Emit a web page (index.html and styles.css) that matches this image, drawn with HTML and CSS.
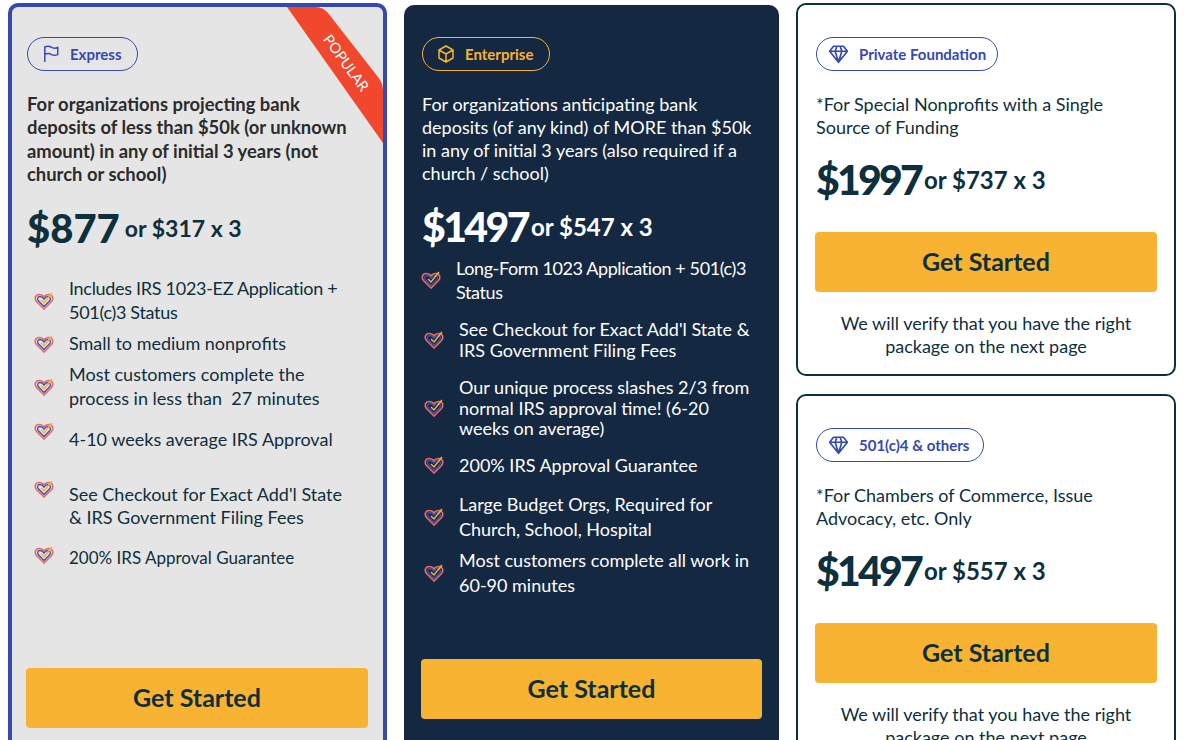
FILE: index.html
```html
<!DOCTYPE html>
<html lang="en">
<head>
    <meta charset="UTF-8">
    <meta name="viewport" content="width=device-width, initial-scale=1.0">
    <title>Pricing</title>
    <link rel="stylesheet" href="styles.css">
</head>
<body>
    <svg class="defs" width="0" height="0">
        <symbol id="heart" viewBox="0 0 20 20">
            <path d="M10 18 L2.500 10.500 C0 7.500 1.500 3.500 5 3.500 C7 3.500 9 4.500 10 6 C11 4.500 13 3.500 15 3.500 C18.500 3.500 20 7.500 17.500 10.500 Z" fill="none" stroke="#ee6a5f" stroke-width="1.600"/>
            <path d="M10 15.500 L4.300 9.800 C2.800 7.800 3.800 5.500 5.800 5.500 C7.300 5.500 9 6.600 10 8.200 C11 6.600 12.700 5.500 14.200 5.500 C16.200 5.500 17.200 7.800 15.700 9.800 Z" fill="none" stroke="#3f51b5" stroke-width="1.300"/>
            <path d="M7 9 L10 12 L18 2" fill="none" stroke="#f8b332" stroke-width="1.500"/>
        </symbol>
    </svg>

    <main class="plans">
        <section class="card card-express">
            <div class="ribbon">
                <svg class="ribbon-shape" viewBox="0 0 103 136"><path d="M7 0 L103 136 V84 Q103 76 98 70 L48 6 Q43 0 36 0 Z" fill="#f0472d"/></svg>
                <span>POPULAR</span>
            </div>
            <div class="badge">
                <svg class="badge-icon" viewBox="0 0 16 16"><path d="M2.500 15 V1.800 C5 .6 7 1.200 8.500 2.200 C10 3 12 3 14 2.200 V8.500 C12 9.300 10 9.300 8.500 8.500 C7 7.600 5 7.200 2.500 8.300" fill="none" stroke="currentColor" stroke-width="1.300"/></svg>
                <span>Express</span>
            </div>
            <p class="intro intro-bold">For organizations projecting bank<br>deposits of less than $50k (or unknown<br>amount) in any of initial 3 years (not<br>church or school)</p>
            <div class="price price-express"><strong>$877</strong><span>or $317 x 3</span></div>
            <ul class="features features-express">
                <li class="squeezed"><svg class="heart"><use href="#heart"/></svg><span>Includes IRS 1023-EZ Application +<br>501(c)3 Status</span></li>
                <li><svg class="heart"><use href="#heart"/></svg><span>Small to medium nonprofits</span></li>
                <li><svg class="heart"><use href="#heart"/></svg><span>Most customers complete the<br>process in less than&nbsp; 27 minutes</span></li>
                <li class="top-icon"><svg class="heart"><use href="#heart"/></svg><span>4-10 weeks average IRS Approval</span></li>
                <li class="top-icon"><svg class="heart"><use href="#heart"/></svg><span>See Checkout for Exact Add'l State<br>&amp; IRS Government Filing Fees</span></li>
                <li class="top-icon"><svg class="heart"><use href="#heart"/></svg><span class="small">200% IRS Approval Guarantee</span></li>
            </ul>
            <a class="cta" href="#">Get Started</a>
        </section>

        <section class="card card-enterprise">
            <div class="badge">
                <svg class="badge-icon" viewBox="0 0 18 18"><path d="M9 1 L16 5 V13 L9 17 L2 13 V5 Z M2 5 L9 9 L16 5 M9 9 V17" fill="none" stroke="currentColor" stroke-width="1.500" stroke-linejoin="round"/></svg>
                <span>Enterprise</span>
            </div>
            <p class="intro">For organizations anticipating bank<br>deposits (of any kind) of MORE than $50k<br>in any of initial 3 years (also required if a<br>church / school)</p>
            <div class="price price-enterprise"><strong>$1497</strong><span>or $547 x 3</span></div>
            <ul class="features features-enterprise">
                <li class="first"><svg class="heart"><use href="#heart"/></svg><span>Long-Form 1023 Application + 501(c)3<br>Status</span></li>
                <li class="tight"><svg class="heart"><use href="#heart"/></svg><span>See Checkout for Exact Add'l State &amp;<br>IRS Government Filing Fees</span></li>
                <li class="tight tight-3"><svg class="heart"><use href="#heart"/></svg><span>Our unique process slashes 2/3 from<br>normal IRS approval time! (6-20<br>weeks on average)</span></li>
                <li><svg class="heart"><use href="#heart"/></svg><span>200% IRS Approval Guarantee</span></li>
                <li class="loose"><svg class="heart"><use href="#heart"/></svg><span>Large Budget Orgs, Required for<br>Church, School, Hospital</span></li>
                <li class="loose"><svg class="heart"><use href="#heart"/></svg><span>Most customers complete all work in<br>60-90 minutes</span></li>
            </ul>
            <a class="cta" href="#">Get Started</a>
        </section>

        <div class="stack">
            <section class="card card-small">
                <div class="badge">
                    <svg class="badge-icon" viewBox="0 0 18 18"><path d="M4.500 2 H13.500 L17 6.500 L9 16.500 L1 6.500 Z M1 6.500 H17 M6 6.500 L9 16.500 L12 6.500 M6 6.500 L7.500 2 M12 6.500 L10.500 2" fill="none" stroke="currentColor" stroke-width="1.500" stroke-linejoin="round"/></svg>
                    <span>Private Foundation</span>
                </div>
                <p class="intro">*For Special Nonprofits with a Single<br>Source of Funding</p>
                <div class="price"><strong>$1997</strong><span>or $737 x 3</span></div>
                <a class="cta" href="#">Get Started</a>
                <p class="note">We will verify that you have the right<br>package on the next page</p>
            </section>
            <section class="card card-small">
                <div class="badge">
                    <svg class="badge-icon" viewBox="0 0 18 18"><path d="M4.500 2 H13.500 L17 6.500 L9 16.500 L1 6.500 Z M1 6.500 H17 M6 6.500 L9 16.500 L12 6.500 M6 6.500 L7.500 2 M12 6.500 L10.500 2" fill="none" stroke="currentColor" stroke-width="1.500" stroke-linejoin="round"/></svg>
                    <span>501(c)4 &amp; others</span>
                </div>
                <p class="intro">*For Chambers of Commerce, Issue<br>Advocacy, etc. Only</p>
                <div class="price"><strong>$1497</strong><span>or $557 x 3</span></div>
                <a class="cta" href="#">Get Started</a>
                <p class="note">We will verify that you have the right<br>package on the next page</p>
            </section>
        </div>
    </main>
</body>
</html>
```

FILE: styles.css
```css
html, body {
    height: 740px;
    overflow: hidden;
}

body {
    font-family: 'Lato', 'Liberation Sans', sans-serif;
    margin: 0;
    padding: 0;
    background-color: #fff;
    color: #0e2f3d;
}

.defs {
    position: absolute;
}

.plans {
    display: grid;
    grid-template-columns: 379px 375px 380px;
    column-gap: 17px;
    align-items: start;
    padding: 3px 0 0 8px;
}

.card {
    box-sizing: border-box;
    position: relative;
    overflow: hidden;
    border-radius: 10px;
}

.card-express {
    height: 800px;
    padding: 30px 15px 0 14px;
    border: 4px solid #3549b1;
    background-color: #e5e5e5;
}

.card-enterprise {
    height: 800px;
    margin-top: 2px;
    padding: 32px 17px 0 17px;
    background-color: #152842;
    color: #fff;
}

.stack {
    display: flex;
    flex-direction: column;
    gap: 18px;
}

.card-small {
    height: 373px;
    padding: 32px 17px 0 17px;
    border: 2px solid #0e2f3d;
}

.card-small + .card-small {
    height: 400px;
}

/* Pill label */
.badge {
    box-sizing: border-box;
    display: inline-flex;
    align-items: center;
    gap: 10px;
    height: 34px;
    padding: 0 11px 0 14px;
    border: 1px solid #3549b1;
    border-radius: 17px;
    color: #3549b1;
    font-size: 15px;
    font-weight: 700;
    margin-left: 1px;
}

.card-express .badge {
    padding-right: 15px;
}

.card-enterprise .badge {
    padding-right: 16px;
    color: #f8b332;
    border-color: #f8b332;
}

.card-small .badge {
    padding-left: 11px;
    gap: 10px;
}

.card-small + .card-small .badge {
    padding-right: 14px;
}

.badge-icon {
    width: 18px;
    height: 18px;
}

.card-small .badge-icon {
    width: 21px;
    height: 20px;
}

.intro {
    margin: 22px 0 0 1px;
    font-size: 18px;
    line-height: 23px;
}

.intro-bold {
    font-size: 18.400px;
    line-height: 23.300px;
    font-weight: 700;
    color: #2b2b2b;
}

.price {
    display: flex;
    align-items: center;
    gap: 3px;
    margin: 14px 0 0 1px;
    height: 52px;
    font-weight: 700;
}

.price strong {
    font-size: 41px;
    letter-spacing: -2.800px;
}

.price span {
    font-size: 24px;
}

.price-express {
    gap: 5px;
    margin-top: 16px;
}

.price-express strong {
    font-size: 40px;
    letter-spacing: 0;
}

.price-express span {
    font-size: 23px;
}

.price-enterprise {
    margin-top: 15px;
}

.price-enterprise strong {
    letter-spacing: -2.600px;
}

.features {
    list-style: none;
    margin: 0;
    padding: 0;
    font-size: 18px;
    line-height: 24px;
}

.features li {
    display: flex;
    align-items: center;
}

.heart {
    flex: none;
    width: 20px;
    height: 20px;
}

.features-express {
    margin-top: 22px;
    padding-left: 8px;
    height: 392px;
}

.features-express li {
    gap: 15px;
    margin-bottom: 7px;
}

.features-express li .heart {
    margin-top: 2px;
}

.features-express .squeezed {
    letter-spacing: -0.300px;
}

.features-express .top-icon {
    align-items: flex-start;
}

.features-express li:nth-child(4) {
    margin-top: 17px;
    margin-bottom: 32px;
}

.features-express li:nth-child(5) {
    line-height: 23px;
    margin-bottom: 17px;
}

.features-express .top-icon .heart {
    margin-top: -6px;
}

.features-express li:nth-child(5) .heart {
    margin-top: -4px;
}

.features-express li:nth-child(6) .heart {
    margin-top: -1px;
}

.features-express .small {
    font-size: 17px;
}

.features-enterprise {
    margin-top: 4px;
    height: 403px;
    padding-left: 3px;
}

.features-enterprise li {
    gap: 15px;
    margin-bottom: 15px;
}

.features-enterprise .first {
    margin-left: -3px;
    letter-spacing: -0.400px;
}

.features-enterprise .tight {
    line-height: 20.500px;
}

.features-enterprise .tight-3 {
    margin-top: 17px;
    margin-bottom: 14px;
}

.features-enterprise .loose {
    line-height: 25px;
    margin-bottom: 6px;
}

.cta {
    display: block;
    height: 60px;
    line-height: 59px;
    border-radius: 4px;
    background-color: #f8b332;
    color: #0e2f3d;
    font-size: 25px;
    font-weight: 700;
    text-align: center;
    text-decoration: none;
}

.card-small .cta {
    margin-top: 27px;
}

.note {
    margin: 20px 0 0 0;
    font-size: 18px;
    line-height: 23px;
    text-align: center;
}

/* Corner ribbon */
.ribbon {
    position: absolute;
    top: 0;
    right: 0;
    width: 103px;
    height: 136px;
}

.ribbon-shape {
    display: block;
    width: 103px;
    height: 136px;
}

.ribbon span {
    position: absolute;
    left: 66px;
    top: 56px;
    color: #fff;
    font-size: 14.500px;
    line-height: 18px;
    white-space: nowrap;
    transform: translate(-50%, -50%) rotate(54deg);
}
```
